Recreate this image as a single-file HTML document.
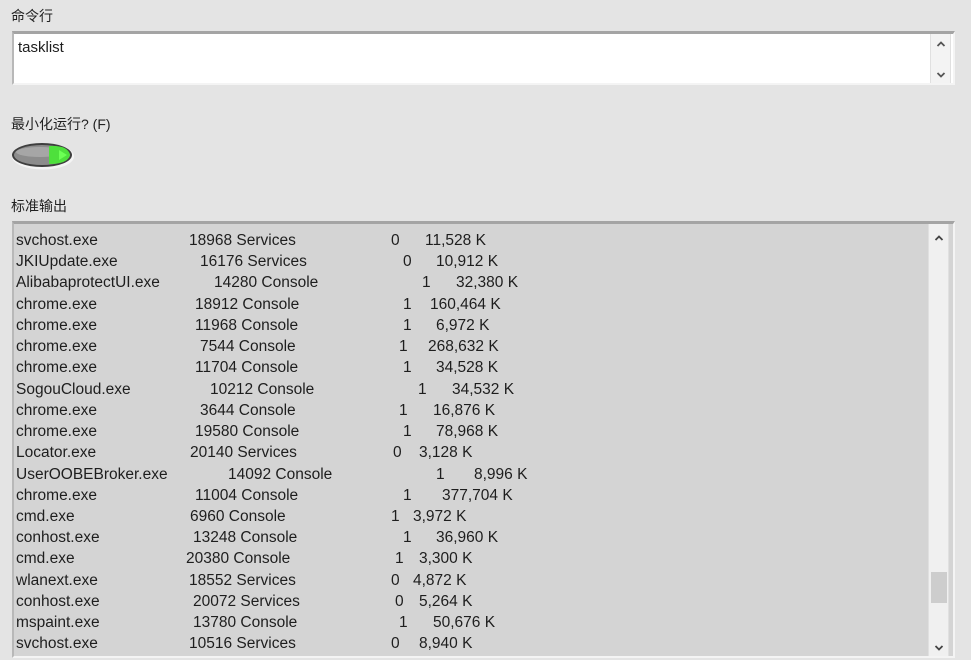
<!DOCTYPE html>
<html><head><meta charset="utf-8">
<style>
*{margin:0;padding:0;box-sizing:border-box}
body{width:971px;height:660px;background:#e4e4e4;position:relative;overflow:hidden;font-family:"Segoe UI","Liberation Sans","Noto Sans CJK SC",sans-serif;color:#1e1e1e}
.lbl{position:absolute;left:11px;font-size:14px;color:#222}
.box{position:absolute;left:12px;right:16px;border-top:3px solid #a4a4a4;border-left:2px solid #b8b8b8;border-right:2px solid #f4f4f4;border-bottom:2px solid #f4f4f4}
.sb{position:absolute;top:0;bottom:0;width:21px;background:#f0f0f0;border-left:1px solid #e0e0e0;border-right:1px solid #e0e0e0}
.arr{position:absolute;left:5px;width:10px;height:10px}
.row{position:absolute;left:0;height:21px;font-size:15.5px;line-height:21px;white-space:nowrap}
.row span{position:absolute;top:1px}
</style></head><body>
<div class="lbl" style="top:6px">命令行</div>
<div class="box" style="top:31px;height:54px;background:#fff">
  <div style="position:absolute;left:4px;top:5px;font-size:15px">tasklist</div>
  <div class="sb" style="right:2px;background:#f3f3f3">
    <svg class="arr" style="top:5px" viewBox="0 0 10 10"><path d="M1.5 7 L5 3.5 L8.5 7" stroke="#555" stroke-width="1.8" fill="none"/></svg>
    <svg class="arr" style="top:36px" viewBox="0 0 10 10"><path d="M1.5 3 L5 6.5 L8.5 3" stroke="#555" stroke-width="1.8" fill="none"/></svg>
  </div>
</div>
<div class="lbl" style="top:114px">最小化运行? (F)</div>
<svg style="position:absolute;left:10px;top:141px" width="66" height="30" viewBox="0 0 66 30">
  <ellipse cx="33" cy="15.5" rx="31" ry="13" fill="#f4f4f4"/>
  <ellipse cx="32" cy="14" rx="30" ry="12" fill="#3e3e3e"/>
  <ellipse cx="32" cy="14" rx="28" ry="10" fill="#8c8c8c"/>
  <ellipse cx="30" cy="11" rx="24" ry="5" fill="#a6a6a6"/>
  <path d="M39 5 Q58 4 60 14 Q58 23 39 23 Z" fill="#4ee03c"/>
  <path d="M49 9 L57 14 L49 19 Z" fill="#6cff55"/>
</svg>
<div class="lbl" style="top:196px">标准输出</div>
<div class="box" style="top:221px;height:437px;background:#d4d4d4;overflow:hidden">
  <div class="sb" style="right:4px">
    <svg class="arr" style="top:9px" viewBox="0 0 10 10"><path d="M1.5 7 L5 3.5 L8.5 7" stroke="#444" stroke-width="1.8" fill="none"/></svg>
    <div style="position:absolute;left:2px;width:16px;top:348px;height:31px;background:#cdcdcd"></div>
    <svg class="arr" style="top:419px" viewBox="0 0 10 10"><path d="M1.5 3 L5 6.5 L8.5 3" stroke="#444" stroke-width="1.8" fill="none"/></svg>
  </div>
</div>
<div style="position:absolute;left:12px;top:221px;width:915px;height:437px">
<div class="row" style="top:8px"><span style="left:4px">svchost.exe</span><span style="left:177px">18968 Services</span><span style="left:379px">0</span><span style="left:413px">11,528 K</span></div>
<div class="row" style="top:29px"><span style="left:4px">JKIUpdate.exe</span><span style="left:188px">16176 Services</span><span style="left:391px">0</span><span style="left:424px">10,912 K</span></div>
<div class="row" style="top:50px"><span style="left:4px">AlibabaprotectUI.exe</span><span style="left:202px">14280 Console</span><span style="left:410px">1</span><span style="left:444px">32,380 K</span></div>
<div class="row" style="top:72px"><span style="left:4px">chrome.exe</span><span style="left:183px">18912 Console</span><span style="left:391px">1</span><span style="left:418px">160,464 K</span></div>
<div class="row" style="top:93px"><span style="left:4px">chrome.exe</span><span style="left:183px">11968 Console</span><span style="left:391px">1</span><span style="left:424px">6,972 K</span></div>
<div class="row" style="top:114px"><span style="left:4px">chrome.exe</span><span style="left:188px">7544 Console</span><span style="left:387px">1</span><span style="left:416px">268,632 K</span></div>
<div class="row" style="top:135px"><span style="left:4px">chrome.exe</span><span style="left:183px">11704 Console</span><span style="left:391px">1</span><span style="left:424px">34,528 K</span></div>
<div class="row" style="top:157px"><span style="left:4px">SogouCloud.exe</span><span style="left:198px">10212 Console</span><span style="left:406px">1</span><span style="left:440px">34,532 K</span></div>
<div class="row" style="top:178px"><span style="left:4px">chrome.exe</span><span style="left:188px">3644 Console</span><span style="left:387px">1</span><span style="left:421px">16,876 K</span></div>
<div class="row" style="top:199px"><span style="left:4px">chrome.exe</span><span style="left:183px">19580 Console</span><span style="left:391px">1</span><span style="left:424px">78,968 K</span></div>
<div class="row" style="top:220px"><span style="left:4px">Locator.exe</span><span style="left:178px">20140 Services</span><span style="left:381px">0</span><span style="left:407px">3,128 K</span></div>
<div class="row" style="top:242px"><span style="left:4px">UserOOBEBroker.exe</span><span style="left:216px">14092 Console</span><span style="left:424px">1</span><span style="left:462px">8,996 K</span></div>
<div class="row" style="top:263px"><span style="left:4px">chrome.exe</span><span style="left:183px">11004 Console</span><span style="left:391px">1</span><span style="left:430px">377,704 K</span></div>
<div class="row" style="top:284px"><span style="left:4px">cmd.exe</span><span style="left:178px">6960 Console</span><span style="left:379px">1</span><span style="left:401px">3,972 K</span></div>
<div class="row" style="top:305px"><span style="left:4px">conhost.exe</span><span style="left:181px">13248 Console</span><span style="left:391px">1</span><span style="left:424px">36,960 K</span></div>
<div class="row" style="top:326px"><span style="left:4px">cmd.exe</span><span style="left:174px">20380 Console</span><span style="left:383px">1</span><span style="left:407px">3,300 K</span></div>
<div class="row" style="top:348px"><span style="left:4px">wlanext.exe</span><span style="left:177px">18552 Services</span><span style="left:379px">0</span><span style="left:401px">4,872 K</span></div>
<div class="row" style="top:369px"><span style="left:4px">conhost.exe</span><span style="left:181px">20072 Services</span><span style="left:383px">0</span><span style="left:407px">5,264 K</span></div>
<div class="row" style="top:390px"><span style="left:4px">mspaint.exe</span><span style="left:181px">13780 Console</span><span style="left:387px">1</span><span style="left:421px">50,676 K</span></div>
<div class="row" style="top:411px"><span style="left:4px">svchost.exe</span><span style="left:177px">10516 Services</span><span style="left:379px">0</span><span style="left:407px">8,940 K</span></div>
</div>
</body></html>
